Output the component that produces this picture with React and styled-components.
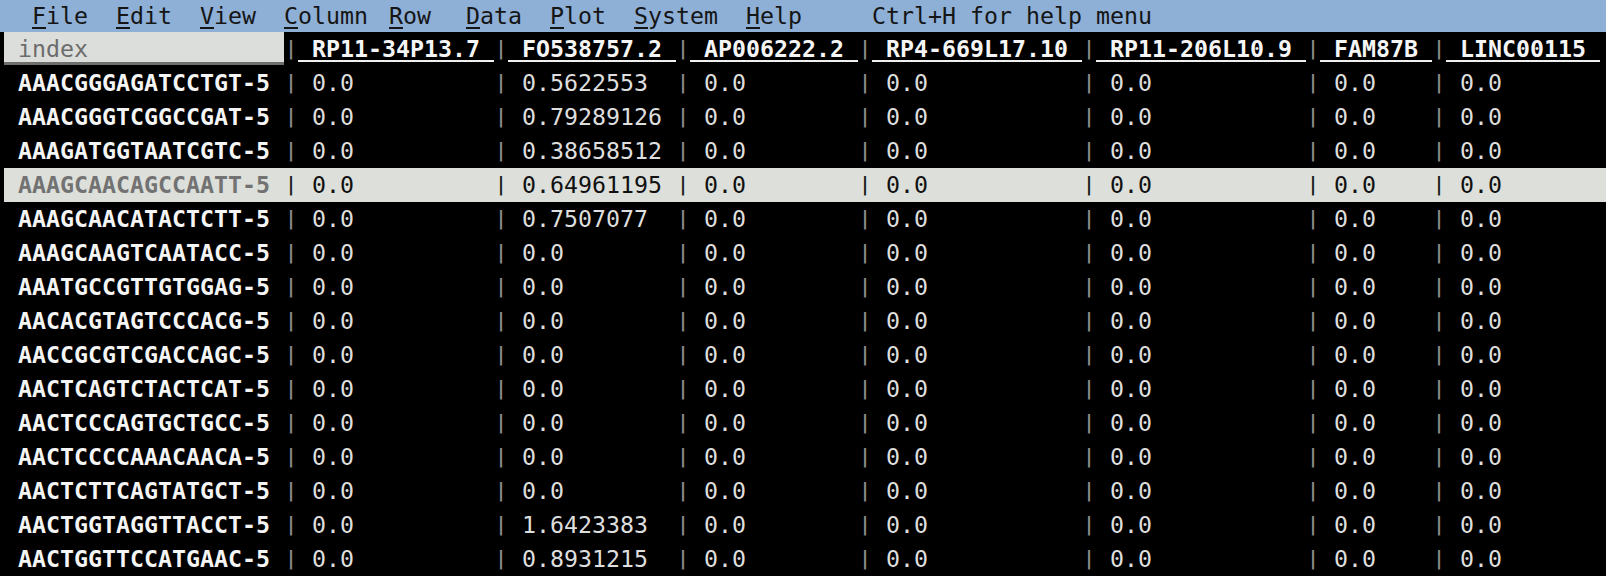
import React from 'react';
import styled, { createGlobalStyle } from 'styled-components';

const CELL = 14;
const LINE = 34;

const Global = createGlobalStyle`
  html, body { margin: 0; padding: 0; background: #000; }
  #root { width: 1606px; height: 576px; overflow: hidden; }
`;

const Screen = styled.div`
  width: 1606px;
  height: 576px;
  overflow: hidden;
  background: #000;
  font-family: "DejaVu Sans Mono", "Liberation Mono", monospace;
  font-size: 23.25px;
  display: flex;
  flex-direction: column;
`;

const MenuBar = styled.div`
  height: 32px;
  line-height: 32px;
  background: #8eafd6;
  color: #151515;
  display: flex;
  padding-left: ${4 + 2 * CELL}px;
  white-space: pre;
  flex: none;
`;

const MenuItem = styled.span`
  width: ${(p) => p.$cells * CELL}px;
  flex: none;
`;

const Mnemonic = styled.span`
  text-decoration: underline;
  text-decoration-thickness: 2px;
  text-underline-offset: 3px;
`;

const Line = styled.div`
  display: flex;
  height: ${LINE}px;
  line-height: ${LINE}px;
  margin-left: 4px;
  white-space: pre;
  flex: none;
  background: ${(p) => (p.$active ? '#dcdfda' : 'transparent')};
`;

const IndexHead = styled.span`
  flex: none;
  box-sizing: content-box;
  width: ${19 * CELL}px;
  height: 30px;
  padding-left: ${CELL}px;
  background: #dcdedb;
  border-bottom: 3px solid #6e6f6d;
  color: #6c6c6c;
  line-height: ${LINE}px;
`;

const IndexCell = styled.span`
  flex: none;
  box-sizing: border-box;
  width: ${20 * CELL}px;
  padding-left: ${CELL}px;
  font-weight: 700;
  color: ${(p) => (p.$active ? '#727272' : '#f5f5f5')};
`;

const Cell = styled.span`
  flex: none;
  display: flex;
  width: ${(p) => p.$cells * CELL}px;
`;

const Bar = styled.span`
  flex: none;
  width: ${CELL}px;
  text-align: center;
  display: inline-block;
  transform: scaleY(0.8);
  color: ${(p) => (p.$active ? '#1a1a1a' : '#8c8c8c')};
`;

const HeadLabel = styled.span`
  flex: none;
  box-sizing: border-box;
  width: ${(p) => p.$cells * CELL}px;
  height: 30px;
  padding-left: ${CELL}px;
  border-bottom: 2px solid #f0f0f0;
  font-weight: 700;
  color: #f5f5f5;
  line-height: ${LINE}px;
`;

const Value = styled.span`
  padding-left: ${CELL}px;
  color: ${(p) => (p.$active ? '#101010' : '#dedede')};
`;

const columns = [
  'RP11-34P13.7',
  'FO538757.2',
  'AP006222.2',
  'RP4-669L17.10',
  'RP11-206L10.9',
  'FAM87B',
  'LINC00115',
];

const rows = [
  ['AAACGGGAGATCCTGT-5', '0.5622553'],
  ['AAACGGGTCGGCCGAT-5', '0.79289126'],
  ['AAAGATGGTAATCGTC-5', '0.38658512'],
  ['AAAGCAACAGCCAATT-5', '0.64961195', true],
  ['AAAGCAACATACTCTT-5', '0.7507077'],
  ['AAAGCAAGTCAATACC-5', '0.0'],
  ['AAATGCCGTTGTGGAG-5', '0.0'],
  ['AACACGTAGTCCCACG-5', '0.0'],
  ['AACCGCGTCGACCAGC-5', '0.0'],
  ['AACTCAGTCTACTCAT-5', '0.0'],
  ['AACTCCCAGTGCTGCC-5', '0.0'],
  ['AACTCCCCAAACAACA-5', '0.0'],
  ['AACTCTTCAGTATGCT-5', '0.0'],
  ['AACTGGTAGGTTACCT-5', '1.6423383'],
  ['AACTGGTTCCATGAAC-5', '0.8931215'],
];

const menu = [
  ['F', 'ile', 6],
  ['E', 'dit', 6],
  ['V', 'iew', 6],
  ['C', 'olumn', 7.5],
  ['R', 'ow', 5.5],
  ['D', 'ata', 6],
  ['P', 'lot', 6],
  ['S', 'ystem', 8],
  ['H', 'elp', 9],
];

export default function App() {
  return (
    <>
      <Global />
      <Screen>
        <MenuBar>
          {menu.map(([m, rest, cells]) => (
            <MenuItem key={m + rest} $cells={cells}>
              <Mnemonic>{m}</Mnemonic>
              {rest}
            </MenuItem>
          ))}
          <span>Ctrl+H for help menu</span>
        </MenuBar>
        <Line>
          <IndexHead>index</IndexHead>
          {columns.map((c) => (
            <Cell key={c} $cells={c.length + 3}>
              <Bar>|</Bar>
              <HeadLabel $cells={c.length + 2}>{c}</HeadLabel>
            </Cell>
          ))}
        </Line>
        {rows.map(([name, second, active]) => (
          <Line key={name} $active={active}>
            <IndexCell $active={active}>{name}</IndexCell>
            {columns.map((c, i) => (
              <Cell key={c} $cells={c.length + 3}>
                <Bar $active={active}>|</Bar>
                <Value $active={active}>{i === 1 ? second : '0.0'}</Value>
              </Cell>
            ))}
          </Line>
        ))}
      </Screen>
    </>
  );
}
